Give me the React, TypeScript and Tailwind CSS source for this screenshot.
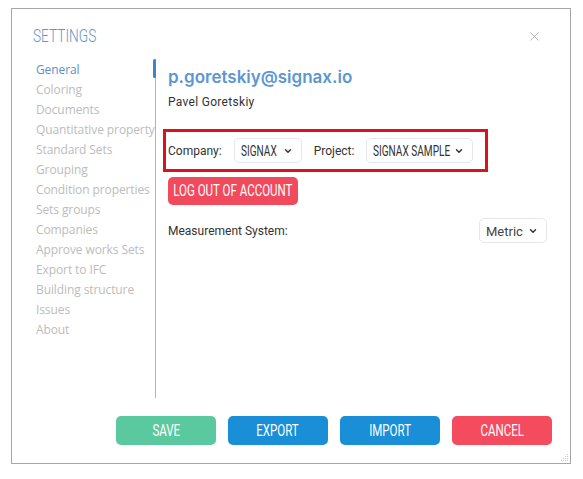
import { ChevronDown, X } from "lucide-react";

const navItems = [
  "General",
  "Coloring",
  "Documents",
  "Quantitative property",
  "Standard Sets",
  "Grouping",
  "Condition properties",
  "Sets groups",
  "Companies",
  "Approve works Sets",
  "Export to IFC",
  "Building structure",
  "Issues",
  "About",
];

const roboto = { fontFamily: '"Roboto", sans-serif' };

// Roboto squeezed horizontally to read like the condensed face in the picture
function Cond({ children, className = "" }: { children: React.ReactNode; className?: string }) {
  return (
    <span className={`inline-block whitespace-nowrap scale-x-[0.72] ${className}`} style={roboto}>
      {children}
    </span>
  );
}

function Select({ value, w, plain = false }: { value: string; w: string; plain?: boolean }) {
  return (
    <div
      className={`flex items-center h-[25px] ${w} pl-[6px] pr-[8px] rounded-[5px] border border-[#e6e6e6] bg-white text-[14px] text-[#333]`}
    >
      <span className="flex-1 min-w-0 whitespace-nowrap">
        {plain ? (
          <span className="text-[13px] text-[#444]" style={roboto}>{value}</span>
        ) : (
          <Cond className="origin-left">{value}</Cond>
        )}
      </span>
      <ChevronDown size={10} strokeWidth={3.5} className="text-[#333] shrink-0" />
    </div>
  );
}

export default function App() {
  return (
    <div className="min-h-screen bg-white pt-[8px] pl-[11px]" style={{ fontFamily: '"Open Sans", sans-serif' }}>
      <div className="relative w-[560px] h-[456px] border border-[#a6a6a6] bg-white flex flex-col">
        <div className="flex items-start justify-between pl-[21px] pr-[28px] pt-[14px] h-[46px]">
          <h1 className="text-[19px] font-light text-[#5f98c8] leading-[24px]">
            <Cond className="origin-left scale-x-[0.66]">SETTINGS</Cond>
          </h1>
          <X size={15} strokeWidth={1} className="text-[#8f8f8f] mt-[6px]" />
        </div>

        <div className="flex flex-1 pt-[4px]">
          <ul className="w-[143px] pl-[24px] pt-[1px] text-[12px] leading-[20px] text-[#bcbcbc] tracking-[-0.1px]">
            {navItems.map((item, i) => (
              <li key={item} className={`whitespace-nowrap ${i === 0 ? "text-[#5b8fc7]" : ""}`}>
                {item}
              </li>
            ))}
          </ul>

          <div className="relative h-[339px] border-l border-[#b5b5b5]">
            <div className="absolute -left-[3px] top-[0px] w-[3px] h-[19px] bg-[#3d86c6] rounded-sm" />
          </div>

          <div className="flex-1 pl-[12px] pt-[6px]">
            <div className="text-[17px] font-semibold text-[#5b97d0] leading-[24px]" style={{ fontFamily: '"Inter", sans-serif' }}>
              p.goretskiy@signax.io
            </div>
            <div className="mt-[4px] text-[12px] text-[#333] tracking-[0.3px]" style={roboto}>
              Pavel Goretskiy
            </div>

            <div className="mt-[18px] -ml-[5px] w-[325px] h-[43px] border-[3px] border-[#d9121b] flex items-center pl-[2px] gap-[12px]">
              <span className="text-[12px] text-[#333]" style={roboto}>Company:</span>
              <Select value="SIGNAX" w="w-[68px]" />
              <span className="text-[12px] text-[#333]" style={roboto}>Project:</span>
              <Select value="SIGNAX SAMPLE" w="w-[107px]" />
            </div>

            <button className="mt-[5px] h-[28px] w-[130px] rounded-[5px] bg-[#f24a5d] text-white text-[16px] flex items-center justify-center overflow-hidden">
              <Cond>LOG OUT OF ACCOUNT</Cond>
            </button>

            <div className="mt-[13px] flex items-center justify-between pr-[23px]">
              <span className="text-[12px] text-[#333]" style={roboto}>Measurement System:</span>
              <Select value="Metric" w="w-[68px]" plain />
            </div>
          </div>
        </div>

        <div className="flex justify-end gap-[12px] pr-[18px] pb-[18px] text-[16px] text-white">
          <button className="w-[100px] h-[29px] rounded-[5px] bg-[#5bc9a0]"><Cond>SAVE</Cond></button>
          <button className="w-[100px] h-[29px] rounded-[5px] bg-[#1a8ed6]"><Cond>EXPORT</Cond></button>
          <button className="w-[100px] h-[29px] rounded-[5px] bg-[#1a8ed6]"><Cond>IMPORT</Cond></button>
          <button className="w-[100px] h-[29px] rounded-[5px] bg-[#f44b5f]"><Cond>CANCEL</Cond></button>
        </div>

        <svg className="absolute right-[1px] bottom-[1px]" width="10" height="10" viewBox="0 0 10 10">
          <g fill="#c8c8c8">
            <rect x="8" y="2" width="1" height="1" />
            <rect x="6" y="4" width="1" height="1" />
            <rect x="8" y="4" width="1" height="1" />
            <rect x="4" y="6" width="1" height="1" />
            <rect x="6" y="6" width="1" height="1" />
            <rect x="8" y="6" width="1" height="1" />
            <rect x="2" y="8" width="1" height="1" />
            <rect x="4" y="8" width="1" height="1" />
            <rect x="6" y="8" width="1" height="1" />
            <rect x="8" y="8" width="1" height="1" />
          </g>
        </svg>
      </div>
    </div>
  );
}
